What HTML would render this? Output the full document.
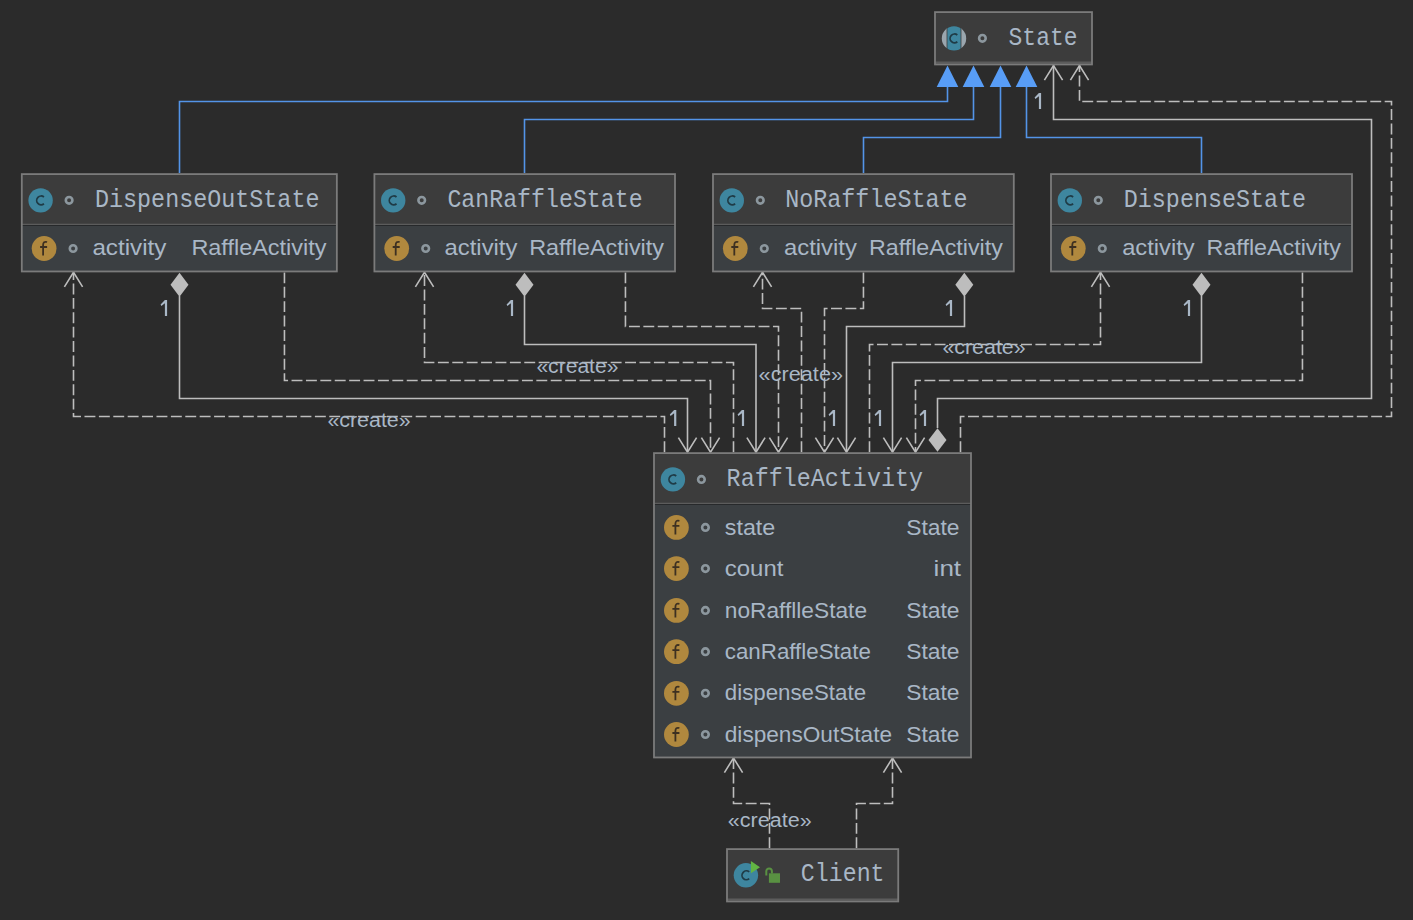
<!DOCTYPE html><html><head><meta charset="utf-8"><style>html,body{margin:0;padding:0;background:#2b2b2b;width:1413px;height:920px;overflow:hidden;position:relative}</style></head><body><svg width="1413" height="920" viewBox="0 0 1413 920" style="position:absolute;left:0;top:0">
<rect width="1413" height="920" fill="#2b2b2b"/>
<path d="M179.5,173 V101.5 H947.5 V87" fill="none" stroke="#5394e8" stroke-width="1.6"/>
<path d="M524.5,173 V119.5 H973.5 V87" fill="none" stroke="#5394e8" stroke-width="1.6"/>
<path d="M863.5,173 V137.5 H1000.5 V87" fill="none" stroke="#5394e8" stroke-width="1.6"/>
<path d="M1201.5,173 V137.5 H1026.5 V87" fill="none" stroke="#5394e8" stroke-width="1.6"/>
<path d="M947.5,65.5 L958.3,87 L936.7,87 Z" fill="#589df6"/>
<path d="M973.5,65.5 L984.3,87 L962.7,87 Z" fill="#589df6"/>
<path d="M1000.5,65.5 L1011.3,87 L989.7,87 Z" fill="#589df6"/>
<path d="M1026.5,65.5 L1037.3,87 L1015.7,87 Z" fill="#589df6"/>
<path d="M664.5,452.2 V416.5 H73.5 V271" fill="none" stroke="#bdbdbd" stroke-width="1.6" stroke-dasharray="10.92 3.48"/>
<path d="M64.4,286.90000000000003 L73.5,272.3 L82.6,286.90000000000003" fill="none" stroke="#bdbdbd" stroke-width="1.6"/>
<path d="M179.5,296 V398.5 H687.5 V451" fill="none" stroke="#bdbdbd" stroke-width="1.6"/>
<path d="M179.5,272.7 L188.5,284.7 L179.5,296.7 L170.5,284.7 Z" fill="#bdbdbd"/>
<path d="M678.4,437.59999999999997 L687.5,452.2 L696.6,437.59999999999997" fill="none" stroke="#bdbdbd" stroke-width="1.6"/>
<path d="M284.45,272.4 V380.5 H710.5 V451" fill="none" stroke="#bdbdbd" stroke-width="1.6" stroke-dasharray="10.92 3.48"/>
<path d="M701.4,437.59999999999997 L710.5,452.2 L719.6,437.59999999999997" fill="none" stroke="#bdbdbd" stroke-width="1.6"/>
<path d="M733.5,452.2 V362.5 H424.5 V271" fill="none" stroke="#bdbdbd" stroke-width="1.6" stroke-dasharray="10.92 3.48"/>
<path d="M415.4,286.90000000000003 L424.5,272.3 L433.6,286.90000000000003" fill="none" stroke="#bdbdbd" stroke-width="1.6"/>
<path d="M524.5,296 V344.5 H756 V451" fill="none" stroke="#bdbdbd" stroke-width="1.6"/>
<path d="M524.5,272.7 L533.5,284.7 L524.5,296.7 L515.5,284.7 Z" fill="#bdbdbd"/>
<path d="M746.9,437.59999999999997 L756,452.2 L765.1,437.59999999999997" fill="none" stroke="#bdbdbd" stroke-width="1.6"/>
<path d="M625.45,272.4 V326.5 H778.5 V451" fill="none" stroke="#bdbdbd" stroke-width="1.6" stroke-dasharray="10.92 3.48"/>
<path d="M769.4,437.59999999999997 L778.5,452.2 L787.6,437.59999999999997" fill="none" stroke="#bdbdbd" stroke-width="1.6"/>
<path d="M801.5,452.2 V308.5 H762.5 V271" fill="none" stroke="#bdbdbd" stroke-width="1.6" stroke-dasharray="10.92 3.48"/>
<path d="M753.4,286.90000000000003 L762.5,272.3 L771.6,286.90000000000003" fill="none" stroke="#bdbdbd" stroke-width="1.6"/>
<path d="M863.45,272.4 V308.5 H824.5 V451" fill="none" stroke="#bdbdbd" stroke-width="1.6" stroke-dasharray="10.92 3.48"/>
<path d="M815.4,437.59999999999997 L824.5,452.2 L833.6,437.59999999999997" fill="none" stroke="#bdbdbd" stroke-width="1.6"/>
<path d="M964.5,296 V326.5 H846.5 V451" fill="none" stroke="#bdbdbd" stroke-width="1.6"/>
<path d="M964.3,272.7 L973.3,284.7 L964.3,296.7 L955.3,284.7 Z" fill="#bdbdbd"/>
<path d="M837.4,437.59999999999997 L846.5,452.2 L855.6,437.59999999999997" fill="none" stroke="#bdbdbd" stroke-width="1.6"/>
<path d="M869.5,452.2 V344.5 H1100.5 V271" fill="none" stroke="#bdbdbd" stroke-width="1.6" stroke-dasharray="10.92 3.48"/>
<path d="M1091.4,286.90000000000003 L1100.5,272.3 L1109.6,286.90000000000003" fill="none" stroke="#bdbdbd" stroke-width="1.6"/>
<path d="M1201.5,296 V362.5 H892.5 V451" fill="none" stroke="#bdbdbd" stroke-width="1.6"/>
<path d="M1201.5,272.7 L1210.5,284.7 L1201.5,296.7 L1192.5,284.7 Z" fill="#bdbdbd"/>
<path d="M883.4,437.59999999999997 L892.5,452.2 L901.6,437.59999999999997" fill="none" stroke="#bdbdbd" stroke-width="1.6"/>
<path d="M1302.45,272.4 V380.5 H915.5 V451" fill="none" stroke="#bdbdbd" stroke-width="1.6" stroke-dasharray="10.92 3.48"/>
<path d="M906.4,437.59999999999997 L915.5,452.2 L924.6,437.59999999999997" fill="none" stroke="#bdbdbd" stroke-width="1.6"/>
<path d="M937.5,428 V398.5 H1371.5 V119.5 H1053.5 V65" fill="none" stroke="#bdbdbd" stroke-width="1.6"/>
<path d="M937.5,428.2 L946.5,440.0 L937.5,451.8 L928.5,440.0 Z" fill="#bdbdbd"/>
<path d="M1044.4,80.1 L1053.5,65.5 L1062.6,80.1" fill="none" stroke="#bdbdbd" stroke-width="1.6"/>
<path d="M960.5,452.2 V416.5 H1391.5 V101.5 H1079.5 V64" fill="none" stroke="#bdbdbd" stroke-width="1.6" stroke-dasharray="10.92 3.48"/>
<path d="M1070.4,80.1 L1079.5,65.5 L1088.6,80.1" fill="none" stroke="#bdbdbd" stroke-width="1.6"/>
<path d="M769.5,848.2 V803.5 H733.5 V757" fill="none" stroke="#bdbdbd" stroke-width="1.6" stroke-dasharray="10.92 3.48"/>
<path d="M724.4,772.6 L733.5,758 L742.6,772.6" fill="none" stroke="#bdbdbd" stroke-width="1.6"/>
<path d="M856.5,848.2 V803.5 H892.5 V757" fill="none" stroke="#bdbdbd" stroke-width="1.6" stroke-dasharray="10.92 3.48"/>
<path d="M883.4,772.6 L892.5,758 L901.6,772.6" fill="none" stroke="#bdbdbd" stroke-width="1.6"/>
<rect x="935" y="12.1" width="157.00" height="52.35" fill="#3c3c3c"/>
<line x1="935" y1="62.45" x2="1092" y2="62.45" stroke="#5c5c5c" stroke-width="2"/>
<rect x="935" y="12.1" width="157.00" height="52.35" fill="none" stroke="#7b7b7b" stroke-width="1.8"/>
<rect x="21.8" y="174.1" width="315.05" height="50.80" fill="#3c3c3c"/>
<rect x="21.8" y="224.9" width="315.05" height="46.55" fill="#3b3f42"/>
<line x1="21.8" y1="224.3" x2="336.85" y2="224.3" stroke="#5c5c5c" stroke-width="1.2"/>
<line x1="21.8" y1="225.5" x2="336.85" y2="225.5" stroke="#27292b" stroke-width="1"/>
<rect x="21.8" y="174.1" width="315.05" height="97.35" fill="none" stroke="#7b7b7b" stroke-width="1.8"/>
<rect x="374.4" y="174.1" width="300.60" height="50.80" fill="#3c3c3c"/>
<rect x="374.4" y="224.9" width="300.60" height="46.55" fill="#3b3f42"/>
<line x1="374.4" y1="224.3" x2="675" y2="224.3" stroke="#5c5c5c" stroke-width="1.2"/>
<line x1="374.4" y1="225.5" x2="675" y2="225.5" stroke="#27292b" stroke-width="1"/>
<rect x="374.4" y="174.1" width="300.60" height="97.35" fill="none" stroke="#7b7b7b" stroke-width="1.8"/>
<rect x="713" y="174.1" width="300.80" height="50.80" fill="#3c3c3c"/>
<rect x="713" y="224.9" width="300.80" height="46.55" fill="#3b3f42"/>
<line x1="713" y1="224.3" x2="1013.8" y2="224.3" stroke="#5c5c5c" stroke-width="1.2"/>
<line x1="713" y1="225.5" x2="1013.8" y2="225.5" stroke="#27292b" stroke-width="1"/>
<rect x="713" y="174.1" width="300.80" height="97.35" fill="none" stroke="#7b7b7b" stroke-width="1.8"/>
<rect x="1051" y="174.1" width="301.00" height="50.80" fill="#3c3c3c"/>
<rect x="1051" y="224.9" width="301.00" height="46.55" fill="#3b3f42"/>
<line x1="1051" y1="224.3" x2="1352" y2="224.3" stroke="#5c5c5c" stroke-width="1.2"/>
<line x1="1051" y1="225.5" x2="1352" y2="225.5" stroke="#27292b" stroke-width="1"/>
<rect x="1051" y="174.1" width="301.00" height="97.35" fill="none" stroke="#7b7b7b" stroke-width="1.8"/>
<rect x="654" y="453.1" width="317.00" height="50.80" fill="#3c3c3c"/>
<rect x="654" y="503.9" width="317.00" height="253.55" fill="#3b3f42"/>
<line x1="654" y1="503.29999999999995" x2="971" y2="503.29999999999995" stroke="#5c5c5c" stroke-width="1.2"/>
<line x1="654" y1="504.5" x2="971" y2="504.5" stroke="#27292b" stroke-width="1"/>
<rect x="654" y="453.1" width="317.00" height="304.35" fill="none" stroke="#7b7b7b" stroke-width="1.8"/>
<rect x="727" y="849.1" width="171.25" height="52.35" fill="#3c3c3c"/>
<line x1="727" y1="899.45" x2="898.25" y2="899.45" stroke="#5c5c5c" stroke-width="2"/>
<rect x="727" y="849.1" width="171.25" height="52.35" fill="none" stroke="#7b7b7b" stroke-width="1.8"/>
<circle cx="954" cy="38.4" r="12.2" fill="#9aa6ae"/>
<rect x="946.6" y="25" width="14.8" height="27" fill="#3c3c3c"/>
<clipPath id="cc"><circle cx="954" cy="38.4" r="12.2"/></clipPath>
<rect x="947.4" y="25" width="13.2" height="27" fill="#3e869f" clip-path="url(#cc)"/>
<path d="M957.33,35.03 A4.4,4.4 0 1 0 957.33,41.77" fill="none" stroke="#1f3b46" stroke-width="1.75"/>
<circle cx="982.4" cy="38.3" r="3.3" fill="none" stroke="#8c979e" stroke-width="2.6"/>
<text transform="translate(1008.60,44.9) scale(1,1.06)" x="0" y="0" font-family="Liberation Mono" font-size="23.6" fill="#a9b7c6" textLength="68.86" lengthAdjust="spacingAndGlyphs">State</text>
<circle cx="40.6" cy="200.4" r="12.2" fill="#3e869f"/>
<path d="M43.93,197.03 A4.4,4.4 0 1 0 43.93,203.77" fill="none" stroke="#1f3b46" stroke-width="1.75"/>
<circle cx="69.1" cy="200.3" r="3.3" fill="none" stroke="#8c979e" stroke-width="2.6"/>
<text transform="translate(95.00,206.5) scale(1,1.06)" x="0" y="0" font-family="Liberation Mono" font-size="23.6" fill="#a9b7c6" textLength="224.45" lengthAdjust="spacingAndGlyphs">DispenseOutState</text>
<circle cx="44.1" cy="248.5" r="12.4" fill="#b0883e"/>
<path d="M47.1,242.0 Q43.1,241.0 43.1,245.0 V255.5 M40.1,247.0 H47.1" fill="none" stroke="#3d3021" stroke-width="1.8"/>
<circle cx="73.1" cy="248.5" r="3.3" fill="none" stroke="#8c979e" stroke-width="2.6"/>
<text x="92.40" y="255.3" font-family="Liberation Sans" font-size="22" fill="#a9b7c6" textLength="74.02" lengthAdjust="spacingAndGlyphs">activity</text>
<text x="191.40" y="255.3" font-family="Liberation Sans" font-size="22" fill="#a9b7c6" textLength="135.03" lengthAdjust="spacingAndGlyphs">RaffleActivity</text>
<circle cx="393.2" cy="200.4" r="12.2" fill="#3e869f"/>
<path d="M396.53,197.03 A4.4,4.4 0 1 0 396.53,203.77" fill="none" stroke="#1f3b46" stroke-width="1.75"/>
<circle cx="421.7" cy="200.3" r="3.3" fill="none" stroke="#8c979e" stroke-width="2.6"/>
<text transform="translate(447.40,206.5) scale(1,1.06)" x="0" y="0" font-family="Liberation Mono" font-size="23.6" fill="#a9b7c6" textLength="195.24" lengthAdjust="spacingAndGlyphs">CanRaffleState</text>
<circle cx="396.7" cy="248.5" r="12.4" fill="#b0883e"/>
<path d="M399.7,242.0 Q395.7,241.0 395.7,245.0 V255.5 M392.7,247.0 H399.7" fill="none" stroke="#3d3021" stroke-width="1.8"/>
<circle cx="425.7" cy="248.5" r="3.3" fill="none" stroke="#8c979e" stroke-width="2.6"/>
<text x="444.60" y="255.3" font-family="Liberation Sans" font-size="22" fill="#a9b7c6" textLength="72.82" lengthAdjust="spacingAndGlyphs">activity</text>
<text x="529.20" y="255.3" font-family="Liberation Sans" font-size="22" fill="#a9b7c6" textLength="134.82" lengthAdjust="spacingAndGlyphs">RaffleActivity</text>
<circle cx="731.8" cy="200.4" r="12.2" fill="#3e869f"/>
<path d="M735.13,197.03 A4.4,4.4 0 1 0 735.13,203.77" fill="none" stroke="#1f3b46" stroke-width="1.75"/>
<circle cx="760.3" cy="200.3" r="3.3" fill="none" stroke="#8c979e" stroke-width="2.6"/>
<text transform="translate(785.20,206.5) scale(1,1.06)" x="0" y="0" font-family="Liberation Mono" font-size="23.6" fill="#a9b7c6" textLength="182.44" lengthAdjust="spacingAndGlyphs">NoRaffleState</text>
<circle cx="735.3" cy="248.5" r="12.4" fill="#b0883e"/>
<path d="M738.3,242.0 Q734.3,241.0 734.3,245.0 V255.5 M731.3,247.0 H738.3" fill="none" stroke="#3d3021" stroke-width="1.8"/>
<circle cx="764.3" cy="248.5" r="3.3" fill="none" stroke="#8c979e" stroke-width="2.6"/>
<text x="784.00" y="255.3" font-family="Liberation Sans" font-size="22" fill="#a9b7c6" textLength="72.82" lengthAdjust="spacingAndGlyphs">activity</text>
<text x="869.00" y="255.3" font-family="Liberation Sans" font-size="22" fill="#a9b7c6" textLength="133.82" lengthAdjust="spacingAndGlyphs">RaffleActivity</text>
<circle cx="1069.8" cy="200.4" r="12.2" fill="#3e869f"/>
<path d="M1073.13,197.03 A4.4,4.4 0 1 0 1073.13,203.77" fill="none" stroke="#1f3b46" stroke-width="1.75"/>
<circle cx="1098.3" cy="200.3" r="3.3" fill="none" stroke="#8c979e" stroke-width="2.6"/>
<text transform="translate(1123.80,206.5) scale(1,1.06)" x="0" y="0" font-family="Liberation Mono" font-size="23.6" fill="#a9b7c6" textLength="182.26" lengthAdjust="spacingAndGlyphs">DispenseState</text>
<circle cx="1073.3" cy="248.5" r="12.4" fill="#b0883e"/>
<path d="M1076.3,242.0 Q1072.3,241.0 1072.3,245.0 V255.5 M1069.3,247.0 H1076.3" fill="none" stroke="#3d3021" stroke-width="1.8"/>
<circle cx="1102.3" cy="248.5" r="3.3" fill="none" stroke="#8c979e" stroke-width="2.6"/>
<text x="1122.20" y="255.3" font-family="Liberation Sans" font-size="22" fill="#a9b7c6" textLength="72.44" lengthAdjust="spacingAndGlyphs">activity</text>
<text x="1206.60" y="255.3" font-family="Liberation Sans" font-size="22" fill="#a9b7c6" textLength="134.22" lengthAdjust="spacingAndGlyphs">RaffleActivity</text>
<circle cx="672.9" cy="479.4" r="12.2" fill="#3e869f"/>
<path d="M676.23,476.03 A4.4,4.4 0 1 0 676.23,482.77" fill="none" stroke="#1f3b46" stroke-width="1.75"/>
<circle cx="701.4" cy="479.4" r="3.3" fill="none" stroke="#8c979e" stroke-width="2.6"/>
<text transform="translate(726.60,485.8) scale(1,1.06)" x="0" y="0" font-family="Liberation Mono" font-size="23.6" fill="#a9b7c6" textLength="196.44" lengthAdjust="spacingAndGlyphs">RaffleActivity</text>
<circle cx="676.4" cy="527.4" r="12.4" fill="#b0883e"/>
<path d="M679.4,520.9 Q675.4,519.9 675.4,523.9 V534.4 M672.4,525.9 H679.4" fill="none" stroke="#3d3021" stroke-width="1.8"/>
<circle cx="705.4" cy="527.4" r="3.3" fill="none" stroke="#8c979e" stroke-width="2.6"/>
<text x="724.80" y="534.5" font-family="Liberation Sans" font-size="22" fill="#a9b7c6" textLength="50.43" lengthAdjust="spacingAndGlyphs">state</text>
<text x="906.20" y="534.5" font-family="Liberation Sans" font-size="22" fill="#a9b7c6" textLength="53.30" lengthAdjust="spacingAndGlyphs">State</text>
<circle cx="676.4" cy="568.6" r="12.4" fill="#b0883e"/>
<path d="M679.4,562.1 Q675.4,561.1 675.4,565.1 V575.6 M672.4,567.1 H679.4" fill="none" stroke="#3d3021" stroke-width="1.8"/>
<circle cx="705.4" cy="568.6" r="3.3" fill="none" stroke="#8c979e" stroke-width="2.6"/>
<text x="724.80" y="575.7" font-family="Liberation Sans" font-size="22" fill="#a9b7c6" textLength="58.63" lengthAdjust="spacingAndGlyphs">count</text>
<text x="933.60" y="575.7" font-family="Liberation Sans" font-size="22" fill="#a9b7c6" textLength="27.53" lengthAdjust="spacingAndGlyphs">int</text>
<circle cx="676.4" cy="610.4" r="12.4" fill="#b0883e"/>
<path d="M679.4,603.9 Q675.4,602.9 675.4,606.9 V617.4 M672.4,608.9 H679.4" fill="none" stroke="#3d3021" stroke-width="1.8"/>
<circle cx="705.4" cy="610.4" r="3.3" fill="none" stroke="#8c979e" stroke-width="2.6"/>
<text x="724.80" y="617.5" font-family="Liberation Sans" font-size="22" fill="#a9b7c6" textLength="142.23" lengthAdjust="spacingAndGlyphs">noRafflleState</text>
<text x="906.20" y="617.5" font-family="Liberation Sans" font-size="22" fill="#a9b7c6" textLength="53.30" lengthAdjust="spacingAndGlyphs">State</text>
<circle cx="676.4" cy="651.6999999999999" r="12.4" fill="#b0883e"/>
<path d="M679.4,645.1999999999999 Q675.4,644.1999999999999 675.4,648.1999999999999 V658.6999999999999 M672.4,650.1999999999999 H679.4" fill="none" stroke="#3d3021" stroke-width="1.8"/>
<circle cx="705.4" cy="651.6999999999999" r="3.3" fill="none" stroke="#8c979e" stroke-width="2.6"/>
<text x="724.80" y="658.8" font-family="Liberation Sans" font-size="22" fill="#a9b7c6" textLength="146.02" lengthAdjust="spacingAndGlyphs">canRaffleState</text>
<text x="906.20" y="658.8" font-family="Liberation Sans" font-size="22" fill="#a9b7c6" textLength="53.30" lengthAdjust="spacingAndGlyphs">State</text>
<circle cx="676.4" cy="693.3" r="12.4" fill="#b0883e"/>
<path d="M679.4,686.8 Q675.4,685.8 675.4,689.8 V700.3 M672.4,691.8 H679.4" fill="none" stroke="#3d3021" stroke-width="1.8"/>
<circle cx="705.4" cy="693.3" r="3.3" fill="none" stroke="#8c979e" stroke-width="2.6"/>
<text x="724.80" y="700.4" font-family="Liberation Sans" font-size="22" fill="#a9b7c6" textLength="141.23" lengthAdjust="spacingAndGlyphs">dispenseState</text>
<text x="906.20" y="700.4" font-family="Liberation Sans" font-size="22" fill="#a9b7c6" textLength="53.30" lengthAdjust="spacingAndGlyphs">State</text>
<circle cx="676.4" cy="734.5" r="12.4" fill="#b0883e"/>
<path d="M679.4,728.0 Q675.4,727.0 675.4,731.0 V741.5 M672.4,733.0 H679.4" fill="none" stroke="#3d3021" stroke-width="1.8"/>
<circle cx="705.4" cy="734.5" r="3.3" fill="none" stroke="#8c979e" stroke-width="2.6"/>
<text x="724.80" y="741.6" font-family="Liberation Sans" font-size="22" fill="#a9b7c6" textLength="167.22" lengthAdjust="spacingAndGlyphs">dispensOutState</text>
<text x="906.20" y="741.6" font-family="Liberation Sans" font-size="22" fill="#a9b7c6" textLength="53.30" lengthAdjust="spacingAndGlyphs">State</text>
<circle cx="745.9" cy="875.3" r="12.2" fill="#3e869f"/>
<path d="M749.23,871.93 A4.4,4.4 0 1 0 749.23,878.67" fill="none" stroke="#1f3b46" stroke-width="1.75"/>
<path d="M750.9,860.9 L760,867.2 L750.9,873.2 Z" fill="#62b543"/>
<rect x="768.9" y="873.3" width="11.1" height="9.5" fill="#599142"/>
<path d="M766.3,875.6 V871.2 A2.8,2.8 0 0 1 771.9,871.2 V873.5" fill="none" stroke="#599142" stroke-width="2"/>
<text transform="translate(800.80,881.3) scale(1,1.06)" x="0" y="0" font-family="Liberation Mono" font-size="23.6" fill="#a9b7c6" textLength="83.75" lengthAdjust="spacingAndGlyphs">Client</text>
<text x="327.40" y="426.5" font-family="Liberation Sans" font-size="20" fill="#a9b7c6" textLength="83.23" lengthAdjust="spacingAndGlyphs">«create»</text>
<text x="536.40" y="372.6" font-family="Liberation Sans" font-size="20" fill="#a9b7c6" textLength="82.04" lengthAdjust="spacingAndGlyphs">«create»</text>
<text x="758.60" y="381.2" font-family="Liberation Sans" font-size="20" fill="#a9b7c6" textLength="84.46" lengthAdjust="spacingAndGlyphs">«create»</text>
<text x="942.40" y="354.2" font-family="Liberation Sans" font-size="20" fill="#a9b7c6" textLength="83.23" lengthAdjust="spacingAndGlyphs">«create»</text>
<text x="727.80" y="826.5" font-family="Liberation Sans" font-size="20" fill="#a9b7c6" textLength="83.85" lengthAdjust="spacingAndGlyphs">«create»</text>
<path d="M1038.9,93 H1041.1 V109 H1038.9 V96.2 L1035.4,99.1 L1034.6,97.4 Z" fill="#a9b7c6"/>
<path d="M164.9,300 H167.1 V316 H164.9 V303.2 L161.4,306.1 L160.6,304.4 Z" fill="#a9b7c6"/>
<path d="M510.9,300 H513.1 V316 H510.9 V303.2 L507.4,306.1 L506.6,304.4 Z" fill="#a9b7c6"/>
<path d="M949.9,300 H952.1 V316 H949.9 V303.2 L946.4,306.1 L945.6,304.4 Z" fill="#a9b7c6"/>
<path d="M1187.9,300 H1190.1 V316 H1187.9 V303.2 L1184.4,306.1 L1183.6,304.4 Z" fill="#a9b7c6"/>
<path d="M674.1,410 H676.3000000000001 V426 H674.1 V413.2 L670.6,416.1 L669.8000000000001,414.4 Z" fill="#a9b7c6"/>
<path d="M741.9,410 H744.1 V426 H741.9 V413.2 L738.4,416.1 L737.6,414.4 Z" fill="#a9b7c6"/>
<path d="M832.9,410 H835.1 V426 H832.9 V413.2 L829.4,416.1 L828.6,414.4 Z" fill="#a9b7c6"/>
<path d="M878.9,410 H881.1 V426 H878.9 V413.2 L875.4,416.1 L874.6,414.4 Z" fill="#a9b7c6"/>
<path d="M923.9,410 H926.1 V426 H923.9 V413.2 L920.4,416.1 L919.6,414.4 Z" fill="#a9b7c6"/>
</svg></body></html>
